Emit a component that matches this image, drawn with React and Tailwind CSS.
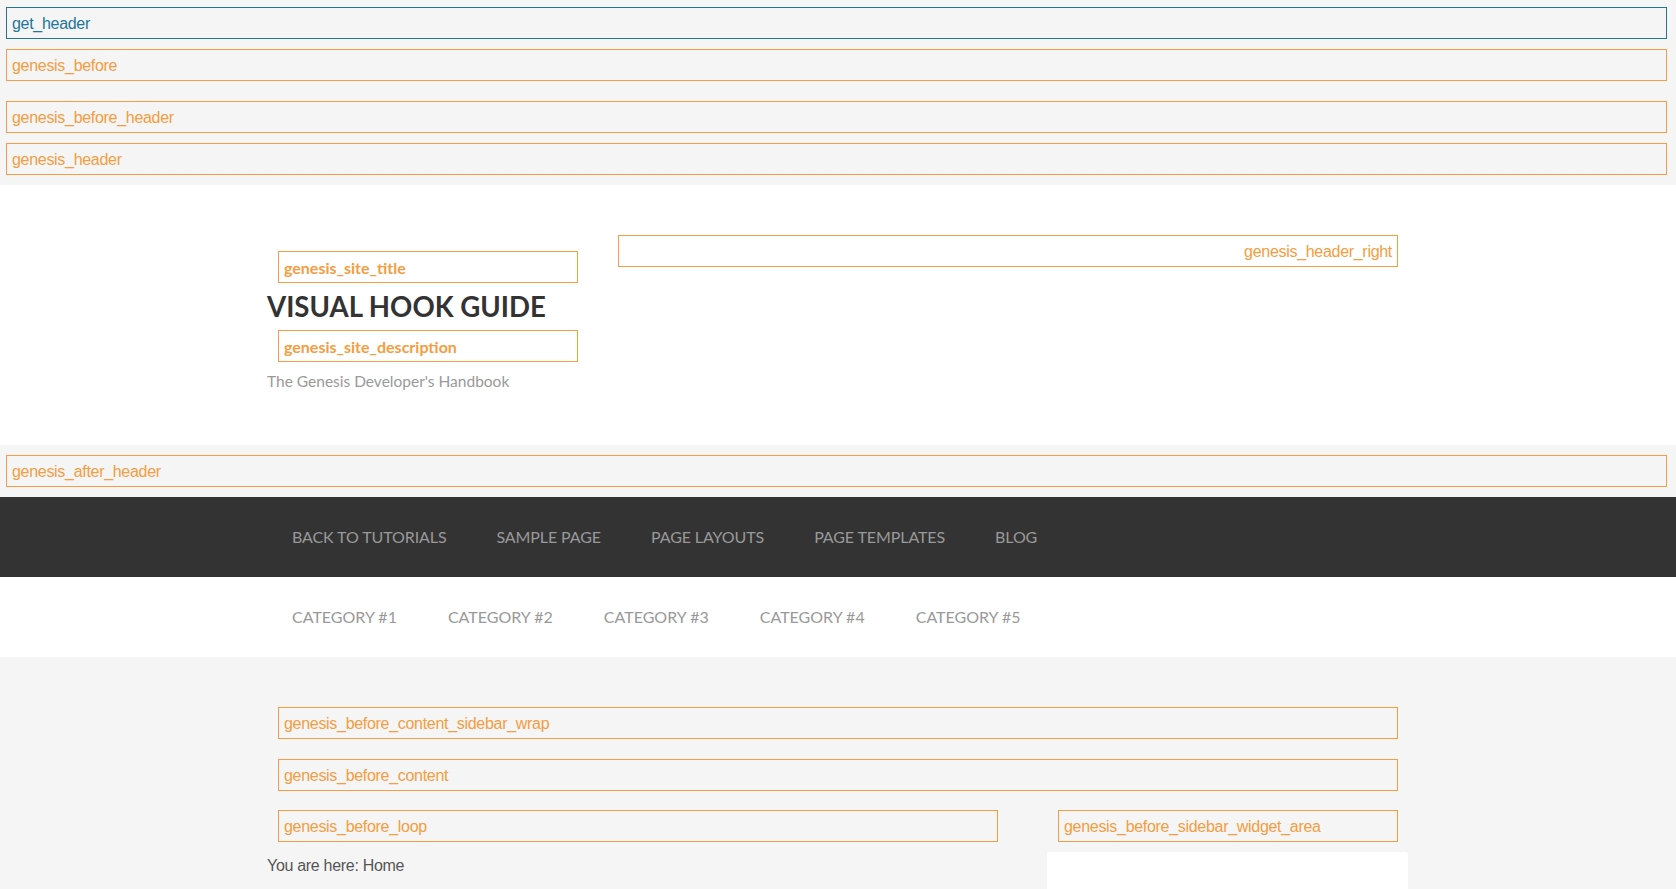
import React from "react";

const helv = "font-['Liberation_Sans',Arial,sans-serif]";
const lato = "font-['Lato','Noto_Sans',sans-serif]";

// one hook marker box
const Hook = ({ name, className = "", blue = false, right = false, bold = false }) => (
  <div
    className={`h-[32px] flex items-center px-[5px] pt-[2px] border text-[16px] leading-none ${
      blue ? "border-[#21759b] text-[#21759b]" : "border-[#f49d41] text-[#f49d41]"
    } ${right ? "justify-end" : ""} ${bold ? `${lato} font-bold` : `${helv} tracking-[-0.3px]`} ${className}`}
  >
    {name}
  </div>
);

const primaryNav = ["Back to Tutorials", "Sample Page", "Page Layouts", "Page Templates", "Blog"];
const secondaryNav = ["Category #1", "Category #2", "Category #3", "Category #4", "Category #5"];

const NavBar = ({ items, dark }) => (
  <nav className={`h-[80px] ${dark ? "bg-[#333333]" : "bg-white"}`}>
    <div className={`w-[1140px] mx-auto h-full flex items-center ${dark ? "gap-[2px]" : "gap-[3px]"}`}>
      {items.map((item) => (
        <span
          key={item}
          className={`px-6 text-[16px] uppercase text-[#999999] ${lato} ${dark ? "tracking-[-0.1px]" : ""}`}
        >
          {item}
        </span>
      ))}
    </div>
  </nav>
);

export default function App() {
  return (
    <div className={`min-h-screen bg-[#f5f5f5] ${helv}`}>
      {/* --- TOP HOOKS --- */}
      <div className="pt-[7px] pb-[10px] pl-[6px] pr-[9px]">
        <Hook name="get_header" blue />
        <Hook name="genesis_before" className="mt-[10px]" />
        <Hook name="genesis_before_header" className="mt-[20px]" />
        <Hook name="genesis_header" className="mt-[10px]" />
      </div>

      {/* --- SITE HEADER --- */}
      <header className="bg-white h-[260px] pt-[40px]">
        <div className="w-[1140px] mx-auto flex justify-between">
          <div className="w-[320px] pt-[16px]">
            <Hook name="genesis_site_title" bold className="mt-[10px] ml-[10px] w-[300px]" />
            <h1 className={`mt-[7px] -ml-px text-[27.6px] leading-[1.2] font-bold text-[#333333] ${lato}`}>
              VISUAL HOOK GUIDE
            </h1>
            <Hook name="genesis_site_description" bold className="mt-[7px] ml-[10px] w-[300px]" />
            <p className={`mt-[6px] -ml-px text-[15.5px] leading-[26px] text-[#999999] ${lato}`}>
              The Genesis Developer's Handbook
            </p>
          </div>
          <div className="w-[800px] px-[10px] pt-[10px]">
            <Hook name="genesis_header_right" right />
          </div>
        </div>
      </header>

      {/* --- AFTER HEADER --- */}
      <div className="py-[10px] pl-[6px] pr-[9px]">
        <Hook name="genesis_after_header" />
      </div>

      <NavBar items={primaryNav} dark />
      <NavBar items={secondaryNav} />

      {/* --- SITE INNER --- */}
      <div className="w-[1140px] mx-auto pt-[50px]">
        <Hook name="genesis_before_content_sidebar_wrap" className="mx-[10px]" />
        <Hook name="genesis_before_content" className="mx-[10px] mt-[20px]" />
        <div className="flex justify-between mt-[19px]">
          <main className="w-[740px]">
            <Hook name="genesis_before_loop" className="mx-[10px]" />
            <p className="mt-[11px] -ml-px text-[16px] tracking-[-0.3px] leading-[26px] text-[#555555]">You are here: Home</p>
          </main>
          <aside className="w-[360px]">
            <Hook name="genesis_before_sidebar_widget_area" className="mx-[10px]" />
            <div className="mt-[10px] -ml-px h-[200px] bg-white rounded-[3px]" />
          </aside>
        </div>
      </div>
    </div>
  );
}
